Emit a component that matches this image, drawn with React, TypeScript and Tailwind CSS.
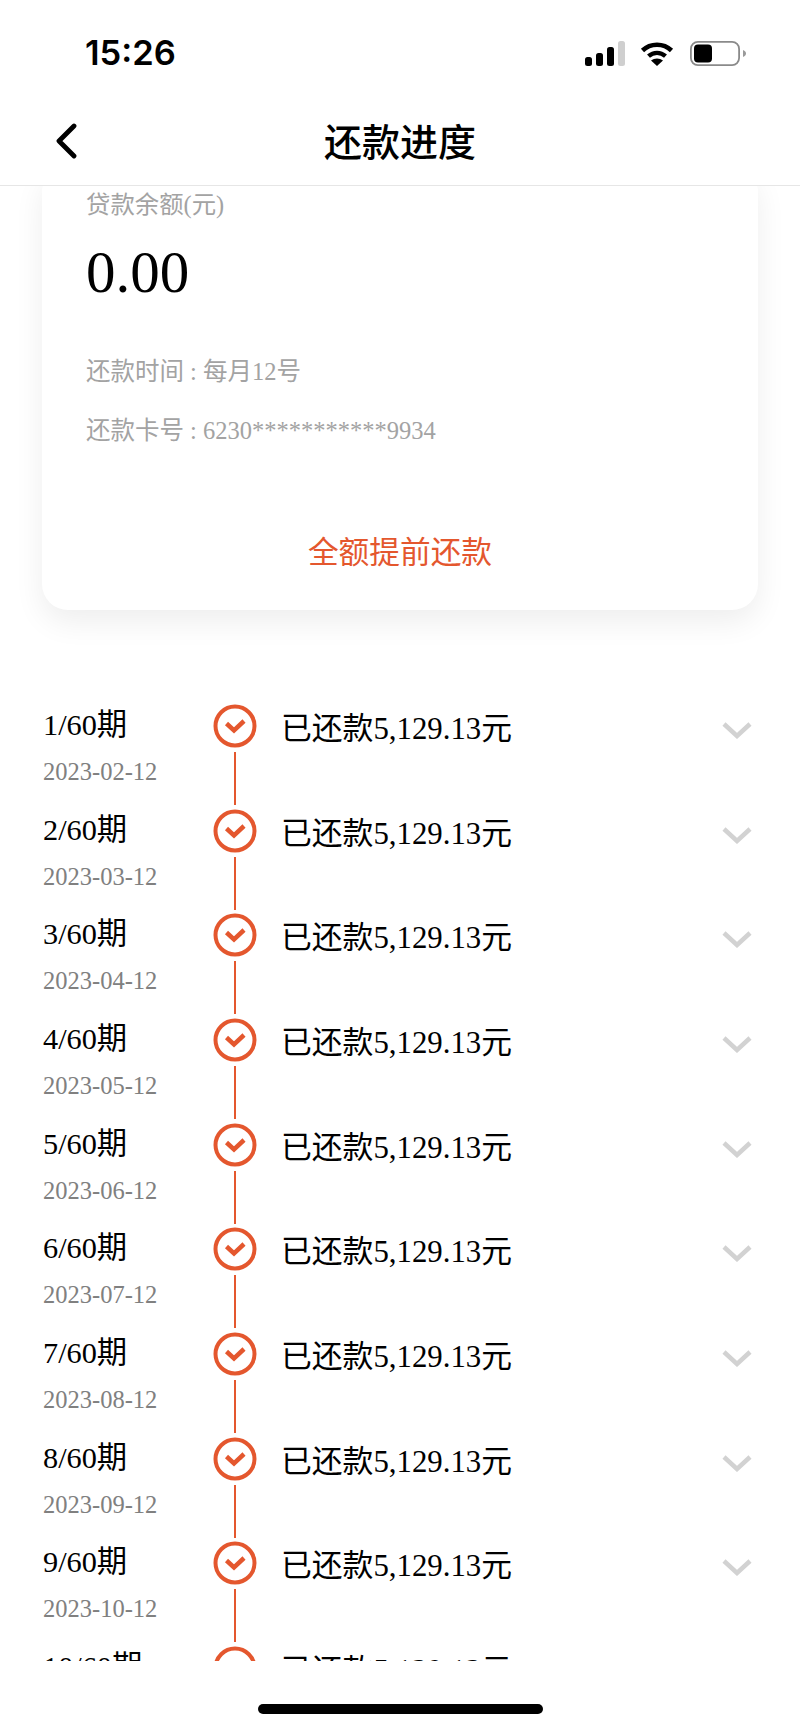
import React from 'react';

const SERIF = "font-['Liberation_Serif','Noto_Sans_CJK_SC',serif]";

const periods = [
  { no: '1/60期', date: '2023-02-12' },
  { no: '2/60期', date: '2023-03-12' },
  { no: '3/60期', date: '2023-04-12' },
  { no: '4/60期', date: '2023-05-12' },
  { no: '5/60期', date: '2023-06-12' },
  { no: '6/60期', date: '2023-07-12' },
  { no: '7/60期', date: '2023-08-12' },
  { no: '8/60期', date: '2023-09-12' },
  { no: '9/60期', date: '2023-10-12' },
  { no: '10/60期', date: '2023-11-12' },
];

const StatusIcons = () => (
  <div className="flex items-center">
    {/* signal */}
    <svg width="40" height="25" viewBox="0 0 40 25">
      <rect x="0" y="16" width="7" height="9" rx="2.5" fill="#000" />
      <rect x="11" y="12" width="7" height="13" rx="2.5" fill="#000" />
      <rect x="22" y="6" width="7" height="19" rx="2.5" fill="#000" />
      <rect x="33" y="0" width="7" height="25" rx="2.5" fill="#cfcfcf" />
    </svg>
    {/* wifi */}
    <svg className="ml-[15px]" width="34" height="25" viewBox="0 0 34 25">
      <path d="M2.5 9.5C10.5 1.8 23.5 1.8 31.5 9.5" fill="none" stroke="#000" strokeWidth="4.6" strokeLinecap="butt" />
      <path d="M8.5 15.2C13.5 10.8 20.5 10.8 25.5 15.2" fill="none" stroke="#000" strokeWidth="4.4" strokeLinecap="butt" />
      <path d="M17 25L11 19.6C14.5 16.8 19.5 16.8 23 19.6Z" fill="#000" />
    </svg>
    {/* battery */}
    <svg className="ml-[16px]" width="56" height="25" viewBox="0 0 56 25">
      <rect x="0.9" y="0.9" width="48.2" height="23.2" rx="7" fill="none" stroke="#8a8a8a" strokeWidth="1.8" />
      <rect x="4" y="3.5" width="18" height="18" rx="4" fill="#000" />
      <path d="M53 9C55 10 56 11 56 12.5C56 14 55 15 53 16Z" fill="#9a9a9a" />
    </svg>
  </div>
);

const CheckCircle = () => (
  <svg width="44" height="44" viewBox="0 0 44 44">
    <circle cx="22" cy="22" r="19.5" fill="none" stroke="#e4572e" strokeWidth="4" />
    <path d="M13.5 19.5L21 26.5L31 17" fill="none" stroke="#e4572e" strokeWidth="4.5" />
  </svg>
);

const Chevron = () => (
  <svg width="30" height="17" viewBox="0 0 30 17">
    <path d="M2 2L15 14L28 2" fill="none" stroke="#d2d2d2" strokeWidth="4.5" />
  </svg>
);

const App: React.FC = () => {
  return (
    <div className={`w-[800px] h-[1731px] bg-white overflow-hidden flex flex-col ${SERIF}`}>
      {/* status bar */}
      <div className="h-[104px] shrink-0 flex items-start justify-between pl-[85px] pr-[54px] pt-[34px]">
        <span className="font-['Inter',sans-serif] text-[34.5px] leading-[38px] font-semibold text-black">15:26</span>
        <div className="pt-[7px]">
          <StatusIcons />
        </div>
      </div>

      {/* nav */}
      <div className="relative h-[82px] shrink-0 flex items-center justify-center border-b border-[#e6e6e6] pb-[10px]">
        <svg className="absolute left-[53px] top-[19px]" width="26" height="36" viewBox="0 0 26 36">
          <path d="M21 3L6 18L21 33" fill="none" stroke="#000" strokeWidth="4.8" strokeLinecap="round" strokeLinejoin="round" />
        </svg>
        <h1 className="font-['Noto_Sans_CJK_SC',sans-serif] text-[38px] leading-[46px] font-medium text-black">还款进度</h1>
      </div>

      {/* scrolled content */}
      <div className="h-[1475px] shrink-0 overflow-hidden">
        <div className="-mt-[20px] mx-[42px] w-[716px] rounded-[26px] bg-white shadow-[0_12px_30px_rgba(0,0,0,0.07)] pt-[24px] pb-[37px] px-[44px]">
          <p className="text-[24.4px] leading-[30px] text-[#a3a3a3]">贷款余额(元)</p>
          <p className="mt-[22px] text-[59px] leading-[60px] text-black">0.00</p>
          <p className="mt-[55px] text-[24.5px] leading-[30px] text-[#a3a3a3]">还款时间 : 每月12号</p>
          <p className="mt-[29px] text-[24.5px] leading-[30px] text-[#a3a3a3]">还款卡号 : 6230***********9934</p>
          <p className="mt-[87px] text-center text-[30.7px] leading-[40px] text-[#e4572e]">全额提前还款</p>
        </div>

        <div className="mt-[94px]">
          {periods.map((p) => (
            <div key={p.no} className="h-[104.67px] flex pl-[43px] pr-[48px]">
              <div className="w-[170px] shrink-0 pt-[1px]">
                <p className="text-[30.3px] leading-[40px] text-black">{p.no}</p>
                <p className="mt-[12px] text-[24.5px] leading-[30px] text-[#808080]">{p.date}</p>
              </div>
              <div className="w-[44px] shrink-0 flex flex-col items-center">
                <CheckCircle />
                <div className="mt-[4px] w-[2px] h-[53px] bg-[#e4572e]" />
              </div>
              <div className="flex-1 flex items-start justify-between pl-[24px]">
                <p className="mt-[5px] text-[30.8px] leading-[40px] text-black">已还款5,129.13元</p>
                <div className="mt-[18px]">
                  <Chevron />
                </div>
              </div>
            </div>
          ))}
        </div>
      </div>

      {/* home indicator */}
      <div className="flex-1 flex justify-center pt-[43px]">
        <div className="w-[285px] h-[10px] rounded-full bg-black" />
      </div>
    </div>
  );
};

export default App;
